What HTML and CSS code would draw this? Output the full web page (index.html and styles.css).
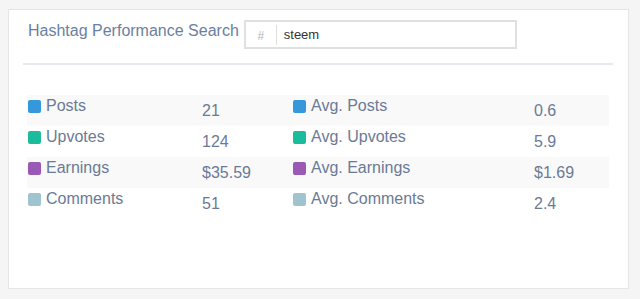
FILE: index.html
```html
<!DOCTYPE html>
<html lang="en">
<head>
  <meta charset="UTF-8" />
  <meta name="viewport" content="width=device-width, initial-scale=1.0" />
  <title>Hashtag Performance Search</title>
  <link rel="stylesheet" href="styles.css">
</head>
<body>
  <div class="card">
    <div class="header">
      <h2>Hashtag Performance Search</h2>
      <div class="search">
        <span class="hash">#</span>
        <input type="text" value="steem" />
      </div>
    </div>
    <hr />
    <div class="stats">
      <div class="row">
        <div class="label"><span class="dot posts"></span>Posts</div>
        <div class="value">21</div>
        <div class="label"><span class="dot posts"></span>Avg. Posts</div>
        <div class="value">0.6</div>
      </div>
      <div class="row">
        <div class="label"><span class="dot upvotes"></span>Upvotes</div>
        <div class="value">124</div>
        <div class="label"><span class="dot upvotes"></span>Avg. Upvotes</div>
        <div class="value">5.9</div>
      </div>
      <div class="row">
        <div class="label"><span class="dot earnings"></span>Earnings</div>
        <div class="value">$35.59</div>
        <div class="label"><span class="dot earnings"></span>Avg. Earnings</div>
        <div class="value">$1.69</div>
      </div>
      <div class="row">
        <div class="label"><span class="dot comments"></span>Comments</div>
        <div class="value">51</div>
        <div class="label"><span class="dot comments"></span>Avg. Comments</div>
        <div class="value">2.4</div>
      </div>
    </div>
  </div>
</body>
</html>
```

FILE: styles.css
```css
body {
  margin: 0;
  padding: 9px 11px 10px 8px;
  background: #f5f5f5;
  font-family: "Liberation Sans", Arial, sans-serif;
  color: #6b7a96;
}
.card {
  background: #fff;
  border: 1px solid #e4e6ea;
  height: 278px;
}
.header {
  display: flex;
  align-items: flex-start;
  gap: 5px;
  margin: 10px 0 0 19px;
}
.header h2 {
  margin: 0;
  padding-top: 2px;
  font-size: 16px;
  font-weight: normal;
  line-height: 18px;
  color: #6b7fa0;
}
.search {
  display: flex;
  align-items: center;
  width: 269px;
  height: 25px;
  border: 2px solid #e0e0e0;
}
.hash {
  width: 30px;
  text-align: center;
  font-size: 12px;
  color: #b5b5b5;
  border-right: 1px solid #dedede;
  line-height: 18px;
  padding-top: 2px;
}
.search input {
  border: none;
  outline: none;
  padding: 0 0 0 7px;
  font-family: inherit;
  font-size: 13px;
  color: #333;
  width: 200px;
}
hr {
  border: none;
  border-top: 2px solid #e7e9ee;
  margin: 14px 15px 0 14px;
}
.stats {
  margin: 30px 19px 0 18px;
}
.row {
  display: grid;
  grid-template-columns: 175px 90px 242px 1fr;
  height: 31px;
  font-size: 16px;
  line-height: 18px;
}
.row:nth-child(odd) {
  background: #f9f9f9;
}
.label {
  display: flex;
  align-items: center;
  align-self: start;
  padding: 2px 0 0 1px;
}
.value {
  padding-top: 7px;
}
.dot {
  width: 13px;
  height: 13px;
  border-radius: 2px;
  margin-right: 5px;
}
.posts { background: #3498db; }
.upvotes { background: #1abc9c; }
.earnings { background: #9b59b6; }
.comments { background: #9fc4cf; }
```
